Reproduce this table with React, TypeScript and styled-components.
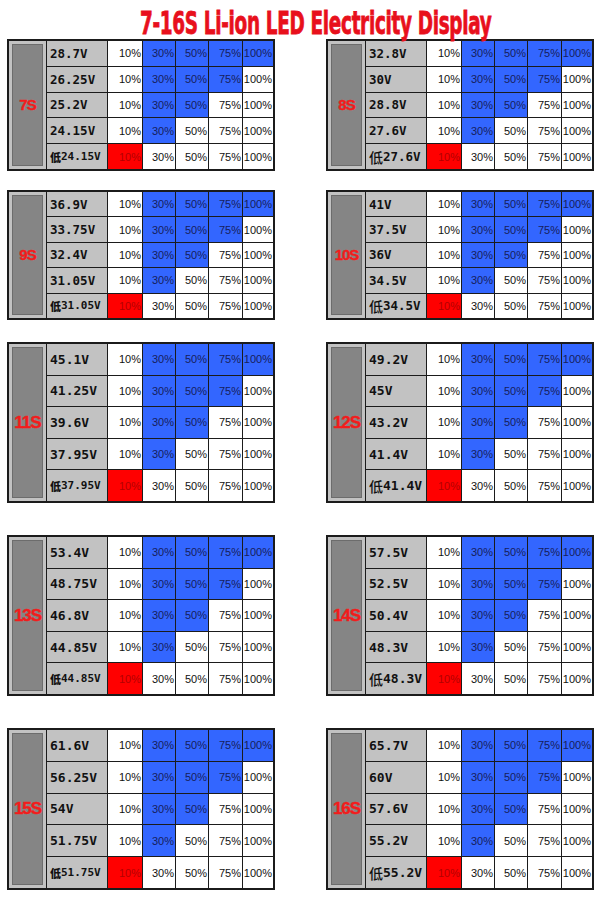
import React from "react";
import styled, { createGlobalStyle } from "styled-components";

const GlobalStyle = createGlobalStyle`
  html, body { margin: 0; padding: 0; background: #ffffff; }
  * { box-sizing: border-box; }
`;

type Pack = {
  name: string;
  volts: string[];
  low: string;
};

type Side = "left" | "right";

const rows: { top: number; height: number; big: boolean; packs: [Pack, Pack] }[] = [
  {
    top: 0,
    height: 132,
    big: false,
    packs: [
      { name: "7S", volts: ["28.7V", "26.25V", "25.2V", "24.15V"], low: "24.15V" },
      { name: "8S", volts: ["32.8V", "30V", "28.8V", "27.6V"], low: "27.6V" },
    ],
  },
  {
    top: 19,
    height: 130,
    big: false,
    packs: [
      { name: "9S", volts: ["36.9V", "33.75V", "32.4V", "31.05V"], low: "31.05V" },
      { name: "10S", volts: ["41V", "37.5V", "36V", "34.5V"], low: "34.5V" },
    ],
  },
  {
    top: 22,
    height: 161,
    big: true,
    packs: [
      { name: "11S", volts: ["45.1V", "41.25V", "39.6V", "37.95V"], low: "37.95V" },
      { name: "12S", volts: ["49.2V", "45V", "43.2V", "41.4V"], low: "41.4V" },
    ],
  },
  {
    top: 32,
    height: 161,
    big: true,
    packs: [
      { name: "13S", volts: ["53.4V", "48.75V", "46.8V", "44.85V"], low: "44.85V" },
      { name: "14S", volts: ["57.5V", "52.5V", "50.4V", "48.3V"], low: "48.3V" },
    ],
  },
  {
    top: 32,
    height: 162,
    big: true,
    packs: [
      { name: "15S", volts: ["61.6V", "56.25V", "54V", "51.75V"], low: "51.75V" },
      { name: "16S", volts: ["65.7V", "60V", "57.6V", "55.2V"], low: "55.2V" },
    ],
  },
];

const levels = ["10%", "30%", "50%", "75%", "100%"];

const Page = styled.div`
  width: 600px;
  height: 900px;
  background: #ffffff;
  padding-left: 7px;
`;

const TitleBar = styled.div`
  height: 39px;
  display: flex;
  align-items: flex-start;
  justify-content: flex-start;
  padding-left: 133px;
  padding-top: 7px;
`;

const TitleText = styled.h1`
  margin: 0;
  font-family: "Liberation Sans Narrow", "DejaVu Sans Condensed", "Liberation Sans", sans-serif;
  font-weight: 700;
  font-size: 32px;
  line-height: 1;
  color: #e8101c;
  white-space: nowrap;
  transform: scaleX(0.64);
  transform-origin: left center;
  letter-spacing: -0.5px;
  -webkit-text-stroke: 0.8px #e8101c;
`;

const BoardRow = styled.div<{ $top: number }>`
  display: flex;
  gap: 51px;
  margin-top: ${(p) => p.$top}px;
`;

const Table = styled.div<{ $height: number }>`
  width: 268px;
  height: ${(p) => p.$height}px;
  display: grid;
  grid-template-columns: 37px 60px 34px 32px 32px 33px 30px;
  grid-template-rows: repeat(5, 1fr);
  gap: 1px;
  border: 2px solid #1b1b1b;
  background: #1b1b1b;
`;

const LabelCell = styled.div`
  grid-row: 1 / span 5;
  grid-column: 1;
  background: #c2c2c2;
  padding: 3px;
  display: flex;
`;

const LabelPlate = styled.div<{ $big: boolean }>`
  flex: 1;
  background: #858585;
  border: 1px solid #6c6c6c;
  display: flex;
  align-items: center;
  justify-content: center;
  font-family: "Liberation Sans", Arial, sans-serif;
  font-weight: 700;
  font-size: ${(p) => (p.$big ? 17 : 15)}px;
  letter-spacing: -1px;
  color: #f21c1c;
  -webkit-text-stroke: 0.4px #f21c1c;
`;

const VoltCell = styled.div<{ $size: number }>`
  background: #c2c2c2;
  display: flex;
  align-items: center;
  padding-left: 3px;
  font-family: "DejaVu Sans Mono", "Liberation Mono", monospace;
  font-weight: 700;
  font-size: ${(p) => p.$size}px;
  color: #111111;
  white-space: nowrap;
  overflow: hidden;
`;

const LowMark = styled.span<{ $side: Side }>`
  font-family: "Noto Sans CJK SC", "Noto Sans", sans-serif;
  font-weight: ${(p) => (p.$side === "left" ? 900 : 500)};
  font-size: ${(p) => (p.$side === "left" ? 11 : 14)}px;
`;

type Tone = "white" | "blue" | "red";

const PctCell = styled.div<{ $tone: Tone }>`
  background: ${(p) => (p.$tone === "blue" ? "#3366ff" : p.$tone === "red" ? "#ff0000" : "#ffffff")};
  color: ${(p) => (p.$tone === "blue" ? "#16205c" : p.$tone === "red" ? "#b30000" : "#111111")};
  display: flex;
  align-items: center;
  justify-content: flex-end;
  padding-right: 1px;
  font-family: "Liberation Sans", Arial, sans-serif;
  font-size: 11px;
  white-space: nowrap;
`;

function toneFor(row: number, col: number): Tone {
  if (row === 4) return col === 0 ? "red" : "white";
  if (col === 0) return "white";
  return col <= 4 - row ? "blue" : "white";
}

function PackTable({ pack, height, big, side }: { pack: Pack; height: number; big: boolean; side: Side }) {
  const voltSize = big ? 13 : 12.5;
  const lowSize = side === "left" ? 11 : voltSize;
  return (
    <Table $height={height}>
      <LabelCell>
        <LabelPlate $big={big}>{pack.name}</LabelPlate>
      </LabelCell>
      {[0, 1, 2, 3, 4].map((r) => (
        <React.Fragment key={r}>
          <VoltCell $size={r === 4 ? lowSize : voltSize}>
            {r === 4 ? (
              <>
                <LowMark $side={side}>低</LowMark>
                {pack.low}
              </>
            ) : (
              pack.volts[r]
            )}
          </VoltCell>
          {levels.map((lv, c) => (
            <PctCell key={lv} $tone={toneFor(r, c)}>
              {lv}
            </PctCell>
          ))}
        </React.Fragment>
      ))}
    </Table>
  );
}

export default function App() {
  return (
    <>
      <GlobalStyle />
      <Page>
        <TitleBar>
          <TitleText>7-16S Li-ion LED Electricity Display</TitleText>
        </TitleBar>
        {rows.map((row, i) => (
          <BoardRow key={i} $top={row.top}>
            <PackTable pack={row.packs[0]} height={row.height} big={row.big} side="left" />
            <PackTable pack={row.packs[1]} height={row.height} big={row.big} side="right" />
          </BoardRow>
        ))}
      </Page>
    </>
  );
}
